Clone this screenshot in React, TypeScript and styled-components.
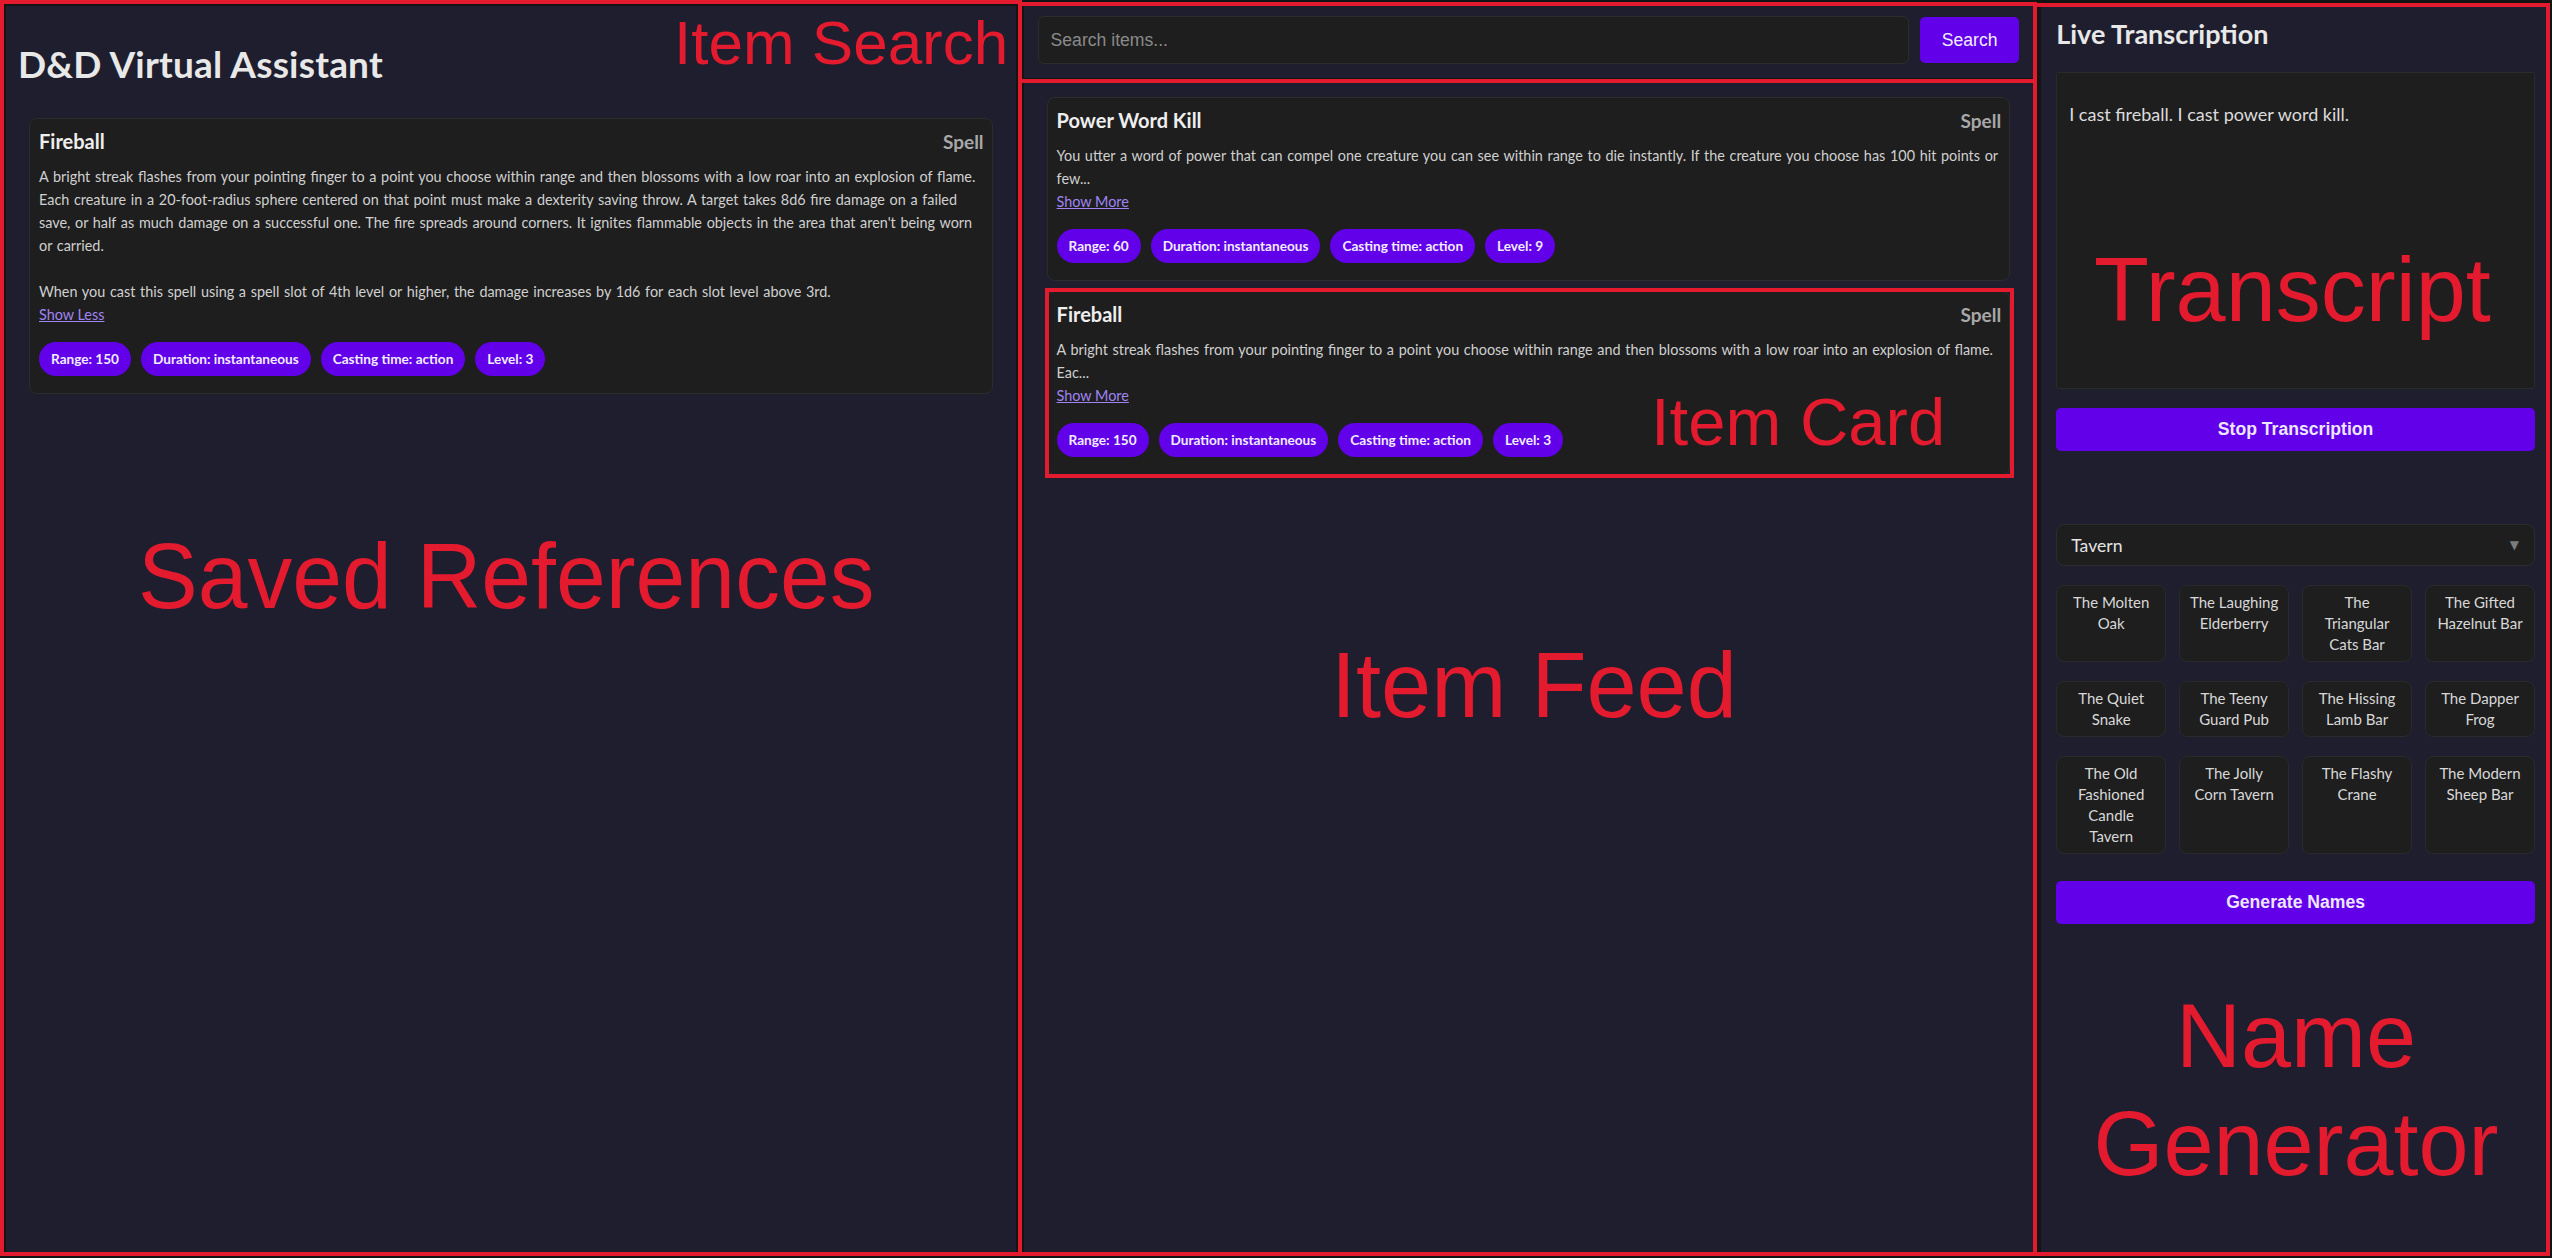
import React from 'react';
import styled, { createGlobalStyle } from 'styled-components';

const GlobalStyle = createGlobalStyle`
  html, body {
    margin: 0;
    padding: 0;
    background: #141414;
  }
  body {
    font-family: Lato, 'Noto Sans', sans-serif;
    color: #e0e0e0;
  }
  * {
    box-sizing: border-box;
  }
`;

interface Stat {
  label: string;
  value: string | number;
}

interface Item {
  name: string;
  type: string;
  description: string;
  stats: Stat[];
}

const FIREBALL: Item = {
  name: 'Fireball',
  type: 'Spell',
  description:
    "A bright streak flashes from your pointing finger to a point you choose within range and then blossoms with a low roar into an explosion of flame. Each creature in a 20-foot-radius sphere centered on that point must make a dexterity saving throw. A target takes 8d6 fire damage on a failed save, or half as much damage on a successful one. The fire spreads around corners. It ignites flammable objects in the area that aren't being worn or carried.\n\nWhen you cast this spell using a spell slot of 4th level or higher, the damage increases by 1d6 for each slot level above 3rd.",
  stats: [
    { label: 'Range', value: 150 },
    { label: 'Duration', value: 'instantaneous' },
    { label: 'Casting time', value: 'action' },
    { label: 'Level', value: 3 },
  ],
};

const POWER_WORD_KILL: Item = {
  name: 'Power Word Kill',
  type: 'Spell',
  description:
    'You utter a word of power that can compel one creature you can see within range to die instantly. If the creature you choose has 100 hit points or fewer, it dies. Otherwise, the spell has no effect.',
  stats: [
    { label: 'Range', value: 60 },
    { label: 'Duration', value: 'instantaneous' },
    { label: 'Casting time', value: 'action' },
    { label: 'Level', value: 9 },
  ],
};

const TAVERN_NAMES = [
  'The Molten Oak',
  'The Laughing Elderberry',
  'The Triangular Cats Bar',
  'The Gifted Hazelnut Bar',
  'The Quiet Snake',
  'The Teeny Guard Pub',
  'The Hissing Lamb Bar',
  'The Dapper Frog',
  'The Old Fashioned Candle Tavern',
  'The Jolly Corn Tavern',
  'The Flashy Crane',
  'The Modern Sheep Bar',
];

/* ---------- layout ---------- */

const Page = styled.div`
  position: relative;
  display: grid;
  grid-template-columns: 2fr 2fr 1fr;
  gap: 8px;
  padding: 6px;
  height: 100vh;
  background: #141414;
`;

const Column = styled.section`
  display: flex;
  flex-direction: column;
  min-width: 0;
  overflow: hidden;
  background: #1e1e2e;
`;

/* ---------- item card ---------- */

const Card = styled.article`
  background: #1e1e1e;
  border: 1px solid #2c2c2c;
  border-radius: 8px;
  padding: 10px 8px 17px 9px;
`;

const CardHeader = styled.header`
  display: flex;
  justify-content: space-between;
  align-items: baseline;
`;

const CardTitle = styled.h3`
  margin: 0;
  font-size: 20px;
  line-height: 24px;
  font-weight: 700;
  color: #eeeeee;
`;

const CardType = styled.span`
  font-size: 19px;
  line-height: 24px;
  font-weight: 700;
  color: #a8a8a8;
`;

const Description = styled.p`
  margin: 11px 0 0;
  font-size: 14.4px;
  line-height: 23px;
  word-spacing: 1px;
  color: #d0d0d0;
  white-space: pre-line;
`;

const ToggleLink = styled.a`
  display: block;
  width: fit-content;
  font-size: 14.4px;
  line-height: 23px;
  color: #a084f2;
  text-decoration: underline;
  cursor: pointer;
`;

const StatList = styled.div`
  display: flex;
  flex-wrap: wrap;
  gap: 10px;
  margin-top: 16px;
`;

const StatPill = styled.span`
  display: inline-flex;
  align-items: center;
  height: 34px;
  padding: 0 12px;
  border-radius: 17px;
  background: #6200ea;
  color: #f1ecff;
  font-size: 13.6px;
  font-weight: 700;
`;

const CardStack = styled.div<{ $top: number }>`
  display: flex;
  flex-direction: column;
  gap: 10px;
  padding: 0 23px;
  margin-top: ${(p) => p.$top}px;
`;

interface ItemCardProps {
  item: Item;
  expanded?: boolean;
}

const ItemCard: React.FC<ItemCardProps> = ({ item, expanded }) => {
  const text = expanded ? item.description : item.description.slice(0, 150) + '...';
  return (
    <Card>
      <CardHeader>
        <CardTitle>{item.name}</CardTitle>
        <CardType>{item.type}</CardType>
      </CardHeader>
      <Description>{text}</Description>
      <ToggleLink>{expanded ? 'Show Less' : 'Show More'}</ToggleLink>
      <StatList>
        {item.stats.map((s) => (
          <StatPill key={s.label}>
            {s.label}: {s.value}
          </StatPill>
        ))}
      </StatList>
    </Card>
  );
};

/* ---------- saved references ---------- */

const AppTitle = styled.h1`
  margin: 36px 0 0;
  padding-left: 12px;
  font-size: 37px;
  line-height: 1.2;
  letter-spacing: 0.2px;
  font-weight: 700;
  color: #e8e8e8;
`;

/* ---------- search ---------- */

const SearchBar = styled.form`
  display: flex;
  align-items: center;
  gap: 11px;
  padding: 10px 14px 14px;
  border-bottom: 2px solid #141414;
`;

const SearchInput = styled.input`
  flex: 1;
  height: 48px;
  padding: 0 12px;
  background: #1e1e1e;
  border: 1px solid #2c2c2c;
  border-radius: 6px;
  color: #e0e0e0;
  font-family: 'Liberation Sans', Arial, sans-serif;
  font-size: 17.6px;
  outline: none;

  &::placeholder {
    color: #8a8a8a;
  }
`;

const SearchButton = styled.button`
  width: 99px;
  height: 46px;
  border: none;
  border-radius: 5px;
  background: #6200ea;
  color: #f2eeff;
  font-family: 'Liberation Sans', Arial, sans-serif;
  font-size: 17.6px;
  cursor: pointer;
`;

/* ---------- side panel ---------- */

const SidePanel = styled.div`
  display: flex;
  flex-direction: column;
  padding: 12px 11px 0 15px;
`;

const PanelHeading = styled.h2`
  margin: 0;
  font-size: 27px;
  line-height: 1.2;
  font-weight: 700;
  color: #e8e8e8;
`;

const TranscriptBox = styled.div`
  height: 317px;
  margin-top: 22px;
  padding: 12px;
  background: #1e1e1e;
  border: 1px solid #2a2a2a;
  border-radius: 2px;

  p {
    margin: 17px 0;
    font-size: 18px;
    line-height: 24px;
    color: #dcdcdc;
  }
`;

const WideButton = styled.button<{ $top: number }>`
  width: 100%;
  height: 43px;
  margin-top: ${(p) => p.$top}px;
  border: none;
  border-radius: 5px;
  background: #6200ea;
  color: #ece6ff;
  font-family: 'Liberation Sans', Arial, sans-serif;
  font-size: 17.6px;
  font-weight: 700;
  cursor: pointer;
`;

const SelectWrap = styled.div`
  position: relative;
  margin-top: 73px;

  &::after {
    content: '▼';
    position: absolute;
    right: 16px;
    top: 50%;
    transform: translateY(-50%);
    font-family: 'DejaVu Sans', sans-serif;
    font-size: 12px;
    color: #7c7c7c;
    pointer-events: none;
  }
`;

const KindSelect = styled.select`
  appearance: none;
  width: 100%;
  height: 42px;
  padding: 0 14px;
  background: #1e1e1e;
  border: 1px solid #2c2c2c;
  border-radius: 8px;
  color: #e4e4e4;
  font-family: Lato, 'Noto Sans', sans-serif;
  font-size: 17.6px;
  outline: none;
`;

const NameGrid = styled.div`
  display: grid;
  grid-template-columns: repeat(4, 1fr);
  gap: 19px 13px;
  margin-top: 19px;
`;

const NameTile = styled.div`
  padding: 6px 9.5px;
  background: #1e1e1e;
  border: 1px solid #2a2a2a;
  border-radius: 8px;
  text-align: center;
  font-size: 15px;
  line-height: 21px;
  color: #d8d8d8;
`;

/* ---------- annotations ---------- */

const Overlay = styled.div`
  position: absolute;
  inset: 0;
  pointer-events: none;
`;

const RedBox = styled.div<{ $x: number; $y: number; $w: number; $h: number }>`
  position: absolute;
  left: ${(p) => p.$x}px;
  top: ${(p) => p.$y}px;
  width: ${(p) => p.$w}px;
  height: ${(p) => p.$h}px;
  border: 4px solid #e41a2e;
`;

const RedLabel = styled.div<{ $x: number; $y: number; $size: number; $sx?: number }>`
  position: absolute;
  left: ${(p) => p.$x}px;
  top: ${(p) => p.$y}px;
  font-family: 'Liberation Sans', Arial, sans-serif;
  font-size: ${(p) => p.$size}px;
  line-height: 1;
  color: #e41a2e;
  white-space: nowrap;
  transform: scaleX(${(p) => p.$sx ?? 1});
  transform-origin: left top;
`;

const RedBlock = styled.div<{ $x: number; $y: number; $w: number; $size: number }>`
  position: absolute;
  left: ${(p) => p.$x}px;
  top: ${(p) => p.$y}px;
  width: ${(p) => p.$w}px;
  font-family: 'Liberation Sans', Arial, sans-serif;
  font-size: ${(p) => p.$size}px;
  line-height: 1.2;
  text-align: center;
  color: #e41a2e;
`;

const Annotations: React.FC = () => (
  <Overlay>
    <RedBox $x={0} $y={0} $w={1022} $h={1256} />
    <RedBox $x={1018} $y={2} $w={1019} $h={81} />
    <RedBox $x={1018} $y={79} $w={1019} $h={1177} />
    <RedBox $x={1045} $y={288} $w={969} $h={190} />
    <RedBox $x={2033} $y={3} $w={517} $h={1253} />
    <RedLabel $x={674} $y={12} $size={62}>Item Search</RedLabel>
    <RedLabel $x={138} $y={530} $size={92} $sx={0.973}>Saved References</RedLabel>
    <RedLabel $x={1331} $y={639} $size={92} $sx={0.98}>Item Feed</RedLabel>
    <RedLabel $x={1651} $y={388} $size={67}>Item Card</RedLabel>
    <RedLabel $x={2094} $y={245} $size={90}>Transcript</RedLabel>
    <RedBlock $x={2044} $y={982} $w={504} $size={90}>
      Name
      <br />
      Generator
    </RedBlock>
  </Overlay>
);

const App: React.FC = () => (
  <>
    <GlobalStyle />
    <Page>
      <Column>
        <AppTitle>D&amp;D Virtual Assistant</AppTitle>
        <CardStack $top={32}>
          <ItemCard item={FIREBALL} expanded />
        </CardStack>
      </Column>

      <Column>
        <SearchBar onSubmit={(e) => e.preventDefault()}>
          <SearchInput placeholder="Search items..." />
          <SearchButton type="submit">Search</SearchButton>
        </SearchBar>
        <CardStack $top={17}>
          <ItemCard item={POWER_WORD_KILL} />
          <ItemCard item={FIREBALL} />
        </CardStack>
      </Column>

      <Column>
        <SidePanel>
          <PanelHeading>Live Transcription</PanelHeading>
          <TranscriptBox>
            <p>I cast fireball. I cast power word kill.</p>
          </TranscriptBox>
          <WideButton $top={19}>Stop Transcription</WideButton>

          <SelectWrap>
            <KindSelect defaultValue="Tavern">
              <option>Tavern</option>
              <option>Shop</option>
              <option>Town</option>
              <option>Character</option>
            </KindSelect>
          </SelectWrap>
          <NameGrid>
            {TAVERN_NAMES.map((n) => (
              <NameTile key={n}>{n}</NameTile>
            ))}
          </NameGrid>
          <WideButton $top={27}>Generate Names</WideButton>
        </SidePanel>
      </Column>
      <Annotations />
    </Page>
  </>
);

export default App;
